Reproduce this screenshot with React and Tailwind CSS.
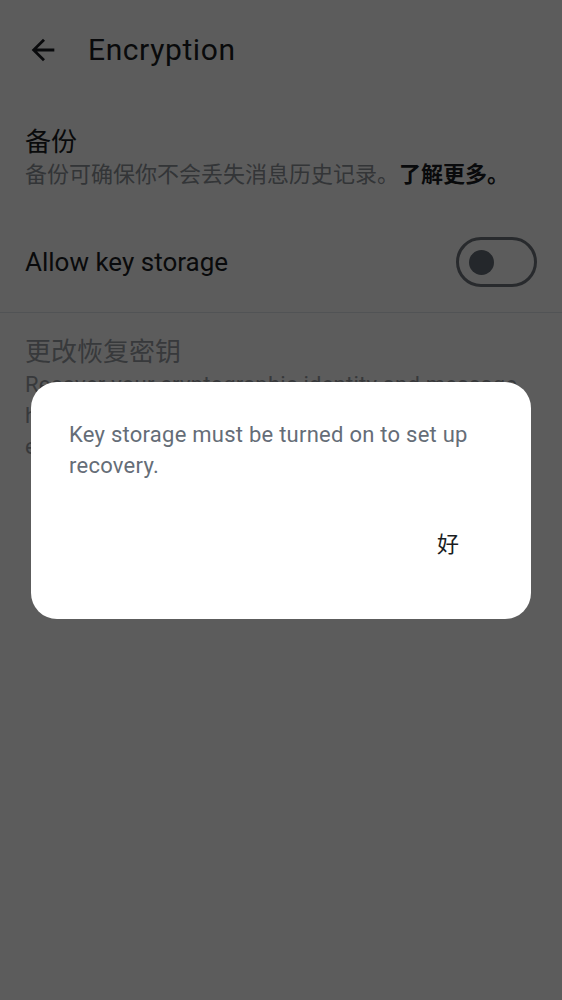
import React from "react";

const latin = { fontFamily: 'Roboto, "Noto Sans CJK SC", sans-serif' };

function ArrowBack() {
  return (
    <svg width="34" height="34" viewBox="0 0 24 24" fill="#1b1d22">
      <path d="M20 11H7.83l5.59-5.59L12 4l-8 8 8 8 1.41-1.41L7.83 13H20v-2z" />
    </svg>
  );
}

export default function App() {
  return (
    <div className="relative w-[562px] h-[1000px] overflow-hidden bg-white" style={latin}>
      {/* Page */}
      <div className="flex flex-col">
        <div className="h-[100px] flex items-center pl-[26px]">
          <ArrowBack />
          <span className="ml-[28px] text-[30px] leading-none tracking-[0.6px] text-[#1b1d22]">Encryption</span>
        </div>

        <div className="px-[25px] pt-[25px] pb-[21px] flex flex-col">
          <div className="text-[26px] leading-[34px] text-[#1b1d22]">备份</div>
          <div className="text-[22px] leading-[32px] text-[#8d9299]">
            备份可确保你不会丢失消息历史记录。<span className="font-bold text-[#1b1d22]">了解更多。</span>
          </div>
        </div>

        <div className="px-[25px] py-[25px] flex items-center justify-between">
          <span className="text-[26px] leading-none text-[#1b1d22]">Allow key storage</span>
          <div className="w-[81px] h-[50px] rounded-full border-[3px] border-[#6f757d] flex items-center pl-[10px]">
            <div className="w-[25px] h-[25px] rounded-full bg-[#656d77]" />
          </div>
        </div>

        <div className="h-px bg-[#e1e6ec]" />

        <div className="px-[25px] pt-[22px] flex flex-col">
          <div className="text-[26px] leading-[34px] text-[#9a9ea5]">更改恢复密钥</div>
          <div className="text-[22px] leading-[31px] tracking-[0.25px] text-[#9a9ea5]">
            Recover your cryptographic identity and message history with a recovery key if you've lost all your existing devices.
          </div>
        </div>
      </div>

      {/* Scrim */}
      <div className="absolute inset-0 bg-black/[0.64]" />

      {/* Dialog */}
      <div className="absolute inset-0 flex items-center justify-center">
        <div className="w-[500px] h-[237px] bg-white rounded-[26px] flex flex-col pt-[37px] pl-[38px] pr-[30px]">
          <p className="text-[22px] leading-[31px] tracking-[0.25px] text-[#656d77]">
            Key storage must be turned on to set up recovery.
          </p>
          <div className="flex-1 flex items-center justify-end pb-[10px]">
            <button className="mr-[26px] px-4 h-[48px] text-[22px] text-[#1b1d22]">好</button>
          </div>
        </div>
      </div>
    </div>
  );
}
